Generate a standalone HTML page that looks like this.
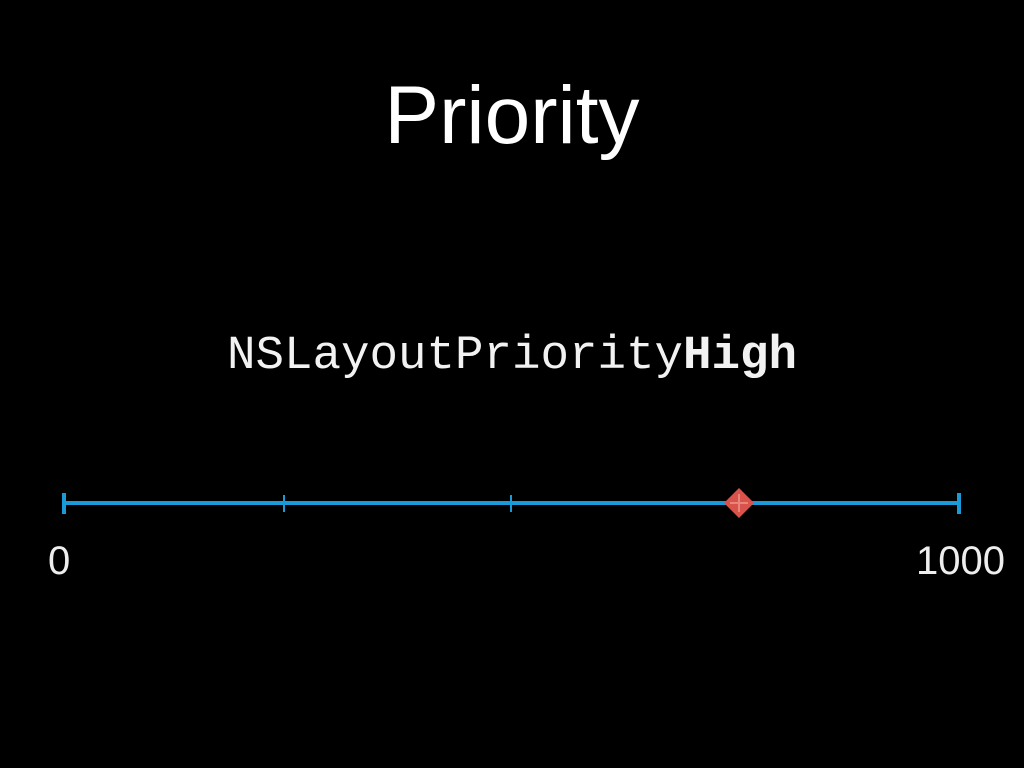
<!DOCTYPE html>
<html><head><style>
body{margin:0;width:1024px;height:768px;background:#000;overflow:hidden;position:relative;font-family:"Liberation Sans",sans-serif;color:#fff}
.t{position:absolute;left:0;width:1024px;text-align:center;top:66px;font-size:82px;font-weight:300;line-height:100px}
.c{position:absolute;left:0;width:1024px;text-align:center;top:331px;font-family:"Liberation Mono",monospace;font-size:47.5px;line-height:50px;color:#f2f2f2}
.n{position:absolute;top:536px;font-size:40px;line-height:50px;color:#eee}
</style></head><body>
<div class="t">Priority</div>
<div class="c">NSLayoutPriority<b>High</b></div>
<svg width="1024" height="768" style="position:absolute;left:0;top:0">
<g stroke="#1a9ad6">
<line x1="64" y1="503" x2="959" y2="503" stroke-width="4"/>
<line x1="64" y1="493" x2="64" y2="514" stroke-width="4"/>
<line x1="959" y1="493" x2="959" y2="514" stroke-width="4"/>
<line x1="284" y1="495" x2="284" y2="512" stroke-width="2"/>
<line x1="511" y1="495" x2="511" y2="512" stroke-width="2"/>
</g>
<polygon points="739,488 754,503 739,518 724,503" fill="#d9534a"/>
<g stroke="#e8857d" stroke-width="2"><line x1="739" y1="494" x2="739" y2="512"/><line x1="730" y1="503" x2="748" y2="503"/></g>
</svg>
<div class="n" style="left:48px">0</div>
<div class="n" style="left:916px">1000</div>
</body></html>
